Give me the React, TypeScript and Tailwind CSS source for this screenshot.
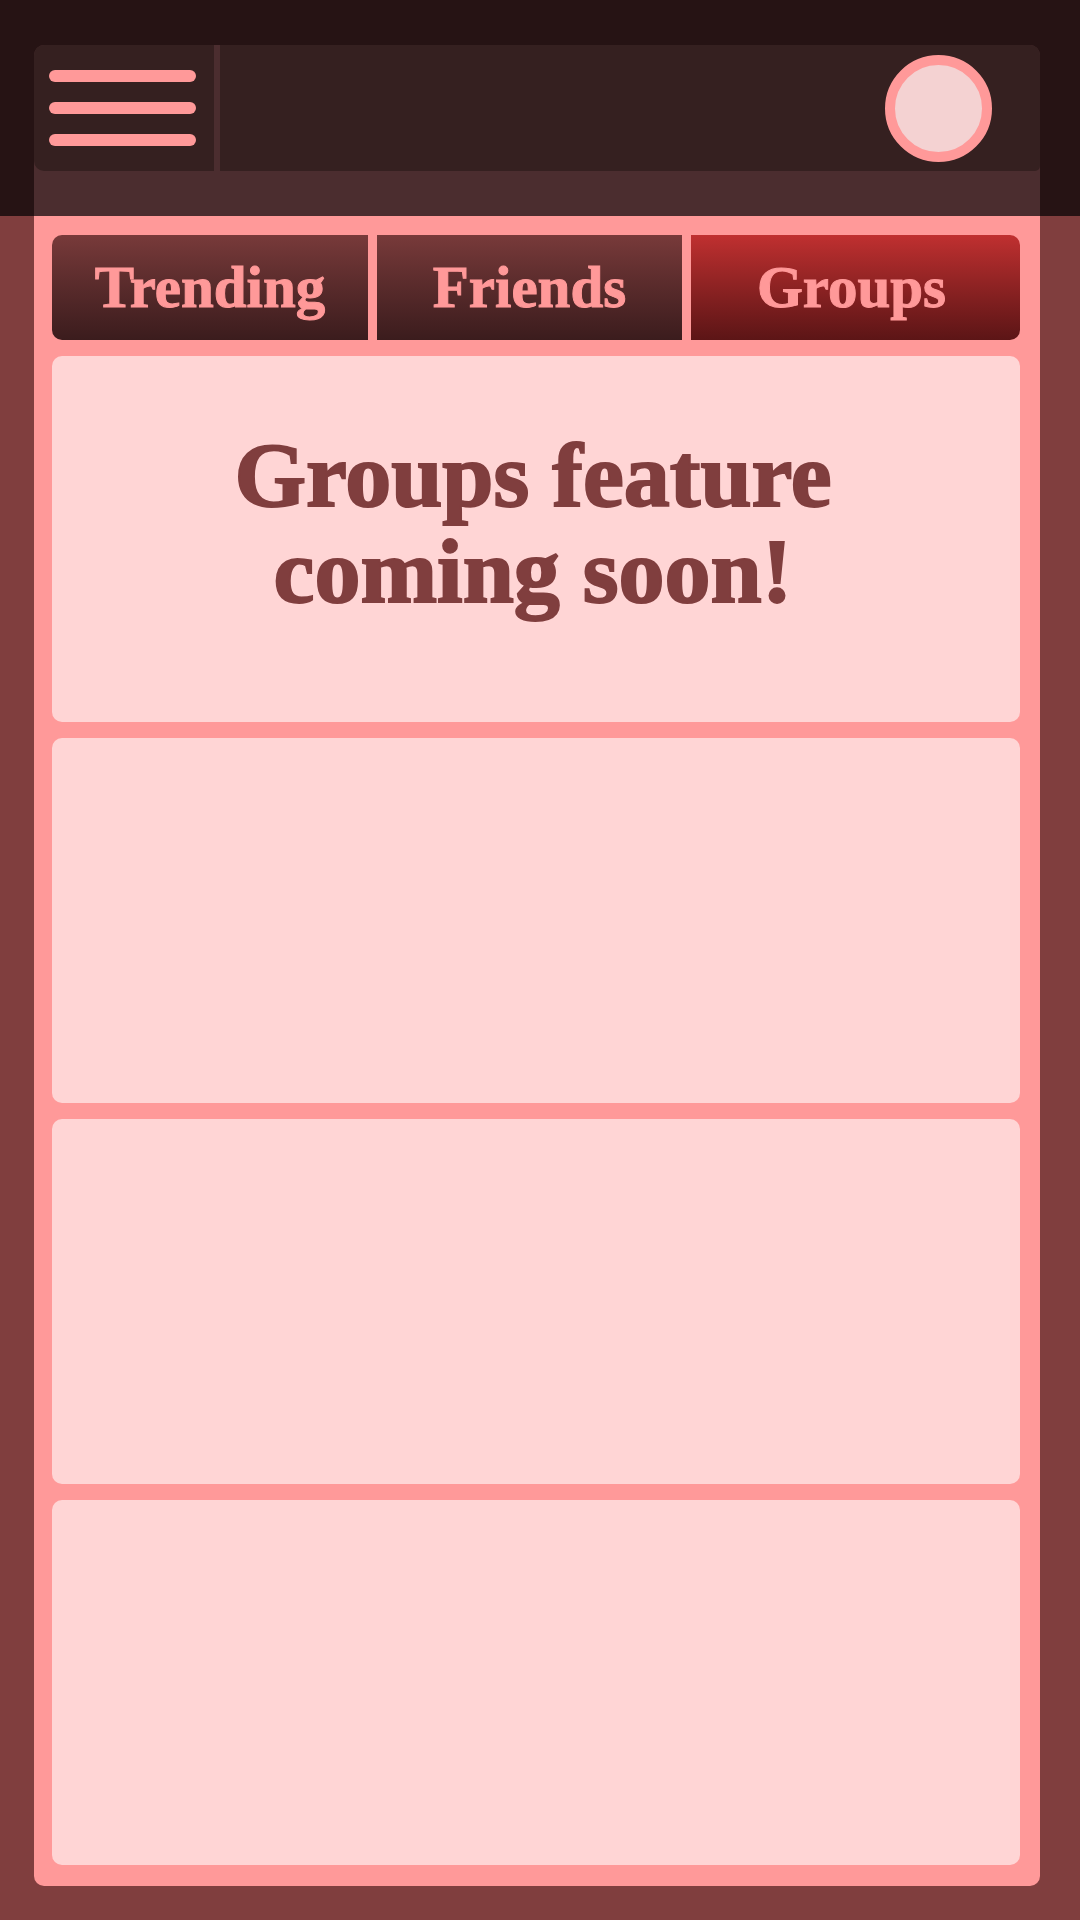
const tabs = [
  { name: "Trending", size: "flex-[316]", look: "rounded-l-[10px] from-[#783a3a] to-[#3b1c1d]" },
  { name: "Friends", size: "flex-[305]", look: "from-[#783a3a] to-[#3b1c1d]" },
  { name: "Groups", size: "flex-[321]", look: "rounded-r-[10px] pr-2 from-[#c03030] to-[#5c1516]" },
];

function Header() {
  return (
    <header className="bg-[#261314] pt-[45px] pr-10 pl-[34px]">
      <div className="rounded-t-[10px] bg-[#4b2d2f] pb-[45px]">
        <div className="flex gap-1.5">
          <button
            type="button"
            aria-label="Menu"
            className="flex h-[126px] w-[180px] flex-col gap-5 rounded-l-[10px] bg-[#352020] pt-[25px] pr-[18px] pl-[15px]"
          >
            <span className="h-3 w-full rounded-full bg-[#ff9999]" />
            <span className="h-3 w-full rounded-full bg-[#ff9999]" />
            <span className="h-3 w-full rounded-full bg-[#ff9999]" />
          </button>
          <div className="flex h-[126px] flex-1 justify-end rounded-tr-[10px] rounded-br-[5px] bg-[#352020] pt-2.5 pr-12">
            <button
              type="button"
              aria-label="Profile"
              className="size-[107px] rounded-full border-10 border-[#ff9999] bg-[#f4d2d2]"
            />
          </div>
        </div>
      </div>
    </header>
  );
}

export default function App() {
  return (
    <div className="flex min-h-screen flex-col bg-[#803e3e] font-['Liberation_Serif',serif] font-bold">
      <Header />
      <main className="mr-10 mb-[34px] ml-[34px] flex flex-1 flex-col gap-4 rounded-b-[10px] bg-[#ff9999] pt-[19px] pr-5 pb-[21px] pl-[18px]">
        <nav className="flex gap-[9px]">
          {tabs.map((tab) => (
            <button
              key={tab.name}
              type="button"
              aria-current={tab.name === "Groups" ? "page" : undefined}
              className={`h-[105px] min-w-0 bg-linear-to-b pb-0.5 text-[59px] leading-[64px] text-[#ff9999] [-webkit-text-stroke:1px] ${tab.size} ${tab.look}`}
            >
              {tab.name}
            </button>
          ))}
        </nav>
        <section className="min-h-[365px] flex-1 rounded-[10px] bg-[#ffd5d5] pt-[71px] pr-1.5">
          <h1 className="text-center text-[92px] leading-24 text-[#803e3e] [-webkit-text-stroke:2px]">
            Groups feature
            <br />
            coming soon!
          </h1>
        </section>
        <section className="min-h-[365px] flex-1 rounded-[10px] bg-[#ffd5d5]" />
        <section className="min-h-[365px] flex-1 rounded-[10px] bg-[#ffd5d5]" />
        <section className="min-h-[365px] flex-1 rounded-[10px] bg-[#ffd5d5]" />
      </main>
    </div>
  );
}
